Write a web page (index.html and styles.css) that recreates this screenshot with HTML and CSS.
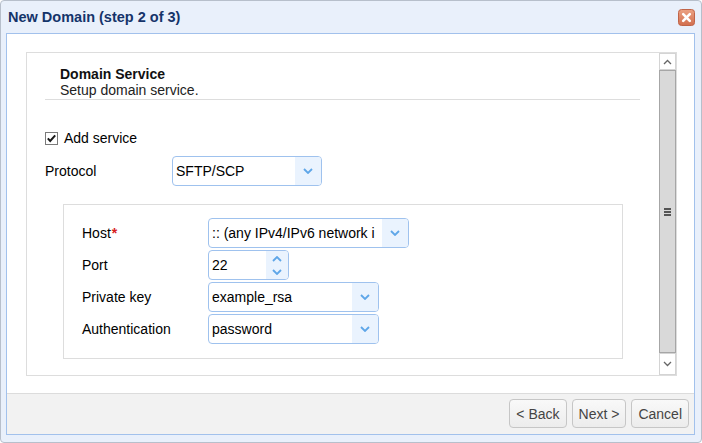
FILE: index.html
```html
<!DOCTYPE html>
<html>
<head>
<meta charset="utf-8">
<link rel="stylesheet" href="styles.css">
</head>
<body>
<div class="window">
  <div class="titlebar">
    <span class="title">New Domain (step 2 of 3)</span>
    <span class="close">
      <svg width="17" height="17" viewBox="0 0 17 17">
        <defs>
          <linearGradient id="cg" x1="0" y1="0" x2="0" y2="1">
            <stop offset="0" stop-color="#eba284"/>
            <stop offset="1" stop-color="#d26f4e"/>
          </linearGradient>
        </defs>
        <rect x="0.5" y="0.5" width="16" height="16" rx="3" fill="url(#cg)" stroke="#c06448"/>
        <path d="M5.2 5.2 L11.8 11.8 M11.8 5.2 L5.2 11.8" stroke="#fff" stroke-width="2.6" stroke-linecap="round"/>
      </svg>
    </span>
  </div>
  <div class="panel">
    <div class="body">
      <div class="scrollbox">
        <div class="content">
          <div class="header">
            <div class="h-title">Domain Service</div>
            <div class="h-sub">Setup domain service.</div>
          </div>
          <div class="check-row">
            <svg class="checkbox" width="13" height="13" viewBox="0 0 13 13">
              <rect x="0.5" y="0.5" width="12" height="12" fill="#fff" stroke="#7a7a7a"/>
              <path d="M2.8 6.4 L5.2 9 L10.2 3.4" fill="none" stroke="#1a1a1a" stroke-width="2"/>
            </svg>
            <span>Add service</span>
          </div>
          <div class="form-row proto">
            <span class="label">Protocol</span>
            <div class="select w150">
              <span class="value">SFTP/SCP</span>
              <span class="drop"><svg width="10" height="6" viewBox="0 0 10 6"><path d="M1 1 L5 5 L9 1" fill="none" stroke="#5ea6e8" stroke-width="1.8"/></svg></span>
            </div>
          </div>
          <div class="group">
            <div class="form-row">
              <span class="label">Host<span class="req">*</span></span>
              <div class="select w201">
                <span class="value">:: (any IPv4/IPv6 network i</span>
                <span class="drop"><svg width="10" height="6" viewBox="0 0 10 6"><path d="M1 1 L5 5 L9 1" fill="none" stroke="#5ea6e8" stroke-width="1.8"/></svg></span>
              </div>
            </div>
            <div class="form-row">
              <span class="label">Port</span>
              <div class="select w81">
                <span class="value">22</span>
                <span class="spin">
                  <svg width="10" height="6" viewBox="0 0 10 6"><path d="M1 5 L5 1 L9 5" fill="none" stroke="#5ea6e8" stroke-width="1.8"/></svg>
                  <svg width="10" height="6" viewBox="0 0 10 6"><path d="M1 1 L5 5 L9 1" fill="none" stroke="#5ea6e8" stroke-width="1.8"/></svg>
                </span>
              </div>
            </div>
            <div class="form-row">
              <span class="label">Private key</span>
              <div class="select w171">
                <span class="value">example_rsa</span>
                <span class="drop"><svg width="10" height="6" viewBox="0 0 10 6"><path d="M1 1 L5 5 L9 1" fill="none" stroke="#5ea6e8" stroke-width="1.8"/></svg></span>
              </div>
            </div>
            <div class="form-row">
              <span class="label">Authentication</span>
              <div class="select w171">
                <span class="value">password</span>
                <span class="drop"><svg width="10" height="6" viewBox="0 0 10 6"><path d="M1 1 L5 5 L9 1" fill="none" stroke="#5ea6e8" stroke-width="1.8"/></svg></span>
              </div>
            </div>
          </div>
        </div>
        <div class="scrollbar">
          <div class="sb-btn up"><svg width="9" height="6" viewBox="0 0 9 6"><path d="M1 5 L4.5 1.5 L8 5" fill="none" stroke="#666" stroke-width="1.3"/></svg></div>
          <div class="sb-thumb">
            <span class="grip"></span><span class="grip"></span><span class="grip"></span>
          </div>
          <div class="sb-btn down"><svg width="9" height="6" viewBox="0 0 9 6"><path d="M1 1 L4.5 4.5 L8 1" fill="none" stroke="#666" stroke-width="1.3"/></svg></div>
        </div>
      </div>
    </div>
    <div class="footer">
      <button class="btn">&lt; Back</button>
      <button class="btn">Next &gt;</button>
      <button class="btn">Cancel</button>
    </div>
  </div>
</div>
</body>
</html>
```

FILE: styles.css
```css
* { box-sizing: border-box; }

html, body {
  margin: 0;
  padding: 0;
  background: #ffffff;
}

body {
  font-family: "Liberation Sans", Arial, sans-serif;
  font-size: 14px;
  color: #000;
}

.window {
  width: 702px;
  height: 443px;
  border: 1px solid #b7bfcb;
  border-radius: 4px;
  background: #e9f0fb;
  display: flex;
  flex-direction: column;
}

.titlebar {
  height: 32px;
  flex: none;
  display: flex;
  align-items: center;
  justify-content: space-between;
  padding: 0 6px 0 7px;
}

.title {
  font-weight: bold;
  font-size: 14.5px;
  color: #15346a;
}

.close {
  display: flex;
  width: 17px;
  height: 17px;
  margin-top: 1px;
}

.panel {
  flex: 1;
  margin: 0 6px 7px 5px;
  border: 1px solid #a2c1ec;
  display: flex;
  flex-direction: column;
  background: #fff;
}

.body {
  flex: 1;
  padding: 18px 17px 17px 19px;
  display: flex;
  flex-direction: column;
}

.scrollbox {
  flex: 1;
  border: 1px solid #dddddd;
  display: flex;
  overflow: hidden;
}

.content {
  flex: 1;
  overflow: hidden;
  padding: 0 19px 0 18px;
}

.header {
  padding: 13px 0 1px 15px;
  border-bottom: 1px solid #dddddd;
  line-height: 16px;
}

.h-title {
  font-weight: bold;
  color: #111;
}

.h-sub {
  color: #222;
}

.check-row {
  margin-top: 30px;
  height: 16px;
  line-height: 16px;
  display: flex;
  align-items: center;
  gap: 6px;
}

.checkbox {
  display: block;
  flex: none;
}

.form-row {
  display: flex;
  align-items: center;
  height: 30px;
}

.form-row + .form-row {
  margin-top: 2px;
}

.proto {
  margin-top: 10px;
}

.label {
  width: 127px;
  flex: none;
  white-space: nowrap;
}

.group .label {
  width: 126px;
}

.req {
  color: #d8201c;
  font-weight: bold;
  margin-left: 1px;
}

.select {
  height: 30px;
  border: 1px solid #9fc2ee;
  border-radius: 4px;
  display: flex;
  overflow: hidden;
  background: #fff;
}

.w150 { width: 150px; }
.w201 { width: 201px; }
.w81 { width: 81px; }
.w171 { width: 171px; }

.value {
  flex: 1;
  min-width: 0;
  padding-left: 3px;
  white-space: nowrap;
  overflow: hidden;
  line-height: 28px;
}

.drop {
  width: 26px;
  flex: none;
  background: #eaf3fe;
  display: flex;
  align-items: center;
  justify-content: center;
}

.drop svg {
  display: block;
}

.spin {
  width: 22px;
  flex: none;
  background: #eaf3fe;
  display: flex;
  flex-direction: column;
  align-items: center;
  justify-content: center;
  gap: 7px;
}

.spin svg {
  display: block;
}

.group {
  margin: 18px 17px 0 18px;
  border: 1px solid #dddddd;
  padding: 13px 18px 14px 18px;
}

.scrollbar {
  width: 17px;
  flex: none;
  display: flex;
  flex-direction: column;
  background: #f0f0f0;
}

.sb-btn {
  background: #fff;
  border: 1px solid #d4d4d4;
  display: flex;
  align-items: center;
  justify-content: center;
}

.sb-btn svg { display: block; }

.up { height: 17px; }
.down { height: 22px; }

.sb-thumb {
  flex: 1;
  background: #d9d9d9;
  border: 1px solid #a6a6a6;
  display: flex;
  flex-direction: column;
  align-items: center;
  justify-content: center;
  gap: 1px;
}

.grip {
  display: block;
  width: 7px;
  height: 2px;
  background: #555;
}

.footer {
  flex: none;
  height: 41px;
  border-top: 1px solid #dcdcdc;
  background: #f2f2f2;
  display: flex;
  justify-content: flex-end;
  align-items: flex-start;
  gap: 5px;
  padding: 5px 5px 0 0;
}

.btn {
  font-family: "Liberation Sans", Arial, sans-serif;
  font-size: 14px;
  color: #444;
  height: 29px;
  padding: 0 6px;
  border: 1px solid #c6c6c6;
  border-radius: 4px;
  background: linear-gradient(#f9f9f9, #ececec);
  margin: 0;
}
```
